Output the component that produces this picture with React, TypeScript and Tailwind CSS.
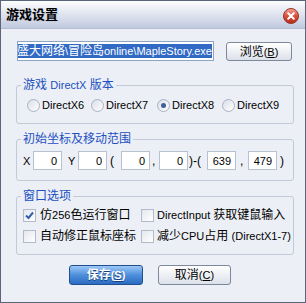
import type { ReactNode } from 'react';

// latin runs are a touch smaller than the cjk glyphs, like tahoma next to simsun
const L = ({ children }: { children: ReactNode }) => <span className="text-[11px]">{children}</span>;

const Radio = ({ checked }: { checked?: boolean }) => (
  <span className="w-[13px] h-[13px] shrink-0 rounded-full border border-[#a9b2c3] bg-linear-to-br from-[#d9dee8] to-white flex items-center justify-center">
    {checked && <span className="w-[5px] h-[5px] rounded-full bg-[#3f5f98]" />}
  </span>
);

const Check = ({ checked }: { checked?: boolean }) => (
  <span className="w-[13px] h-[13px] shrink-0 border border-[#b3bbcb] bg-linear-to-br from-[#e3e7ee] to-white flex items-center justify-center">
    {checked && (
      <svg width="9" height="9" viewBox="0 0 9 9">
        <path d="M1 4.5 L3.5 7 L8 1.5" stroke="#3560a8" strokeWidth="2" fill="none" />
      </svg>
    )}
  </span>
);

const Num = ({ value }: { value: string }) => (
  <span className="w-[29px] h-[19px] shrink-0 bg-white border border-[#b7c1d2] flex items-center justify-end pr-[4px]">
    <L>{value}</L>
  </span>
);

const Group = ({ title, className, children }: { title: ReactNode; className: string; children: ReactNode }) => (
  <fieldset className={`w-[278px] border border-[#c2c9d7] rounded-[3px] ${className}`}>
    <legend className="ml-[4px] px-[2px] h-[14px] leading-[14px] text-[#2150c2]">{title}</legend>
    {children}
  </fieldset>
);

export default function App() {
  return (
    <div className="w-[306px] h-[303px] flex flex-col border border-[#5b6478] bg-[#eceff5] overflow-hidden text-black text-[12px] leading-[14px] font-[family-name:Liberation_Sans,Noto_Sans_CJK_SC,sans-serif]">
      {/* title bar */}
      <div className="h-[28px] shrink-0 flex items-center justify-between pl-[5px] pr-[6px] bg-linear-to-b from-[#fdfdfe] to-[#c1cadf] border-b border-[#b3bcd0]">
        <span className="font-bold text-[13px] [text-shadow:1px_1px_0_#c8cfdc]">游戏设置</span>
        <svg width="16" height="16" viewBox="0 0 16 16" className="mt-[2px]">
          <defs>
            <linearGradient id="cl" x1="0" y1="0" x2="0" y2="1">
              <stop offset="0" stopColor="#f4a698" />
              <stop offset="0.5" stopColor="#d9513d" />
              <stop offset="1" stopColor="#b52a1a" />
            </linearGradient>
          </defs>
          <circle cx="8" cy="8" r="7.5" fill="url(#cl)" stroke="#9a3426" strokeWidth="1" />
          <path d="M5.2 5.2 L10.8 10.8 M10.8 5.2 L5.2 10.8" stroke="white" strokeWidth="2" strokeLinecap="round" />
        </svg>
      </div>

      <div className="flex-1 pl-[15px] pt-[12px]">
        {/* exe path */}
        <div className="flex items-start">
          <div className="ml-[1px] w-[197px] h-[20px] border border-[#8fa6c2] bg-white flex items-center justify-end overflow-hidden pr-[1px]">
            <span className="whitespace-nowrap bg-[#316ac5] text-white h-[14px] leading-[14px]">
              盛大网络<L>\</L>冒险岛<L>online\MapleStory.exe</L>
            </span>
          </div>
          <button className="ml-[12px] mt-[1px] w-[66px] h-[19px] rounded-[3px] border border-[#7d889c] bg-linear-to-b from-white to-[#dce1e9] flex items-center justify-center">
            浏览<L>(<span className="underline">B</span>)</L>
          </button>
        </div>

        {/* directx version */}
        <Group
          className="mt-[17px] pt-[6px] pb-[11px]"
          title={<>游戏 <L>DirectX</L> 版本</>}
        >
          <div className="grid grid-cols-[64px_66px_65px_auto] pl-[10px] h-[14px]">
            {['DirectX6', 'DirectX7', 'DirectX8', 'DirectX9'].map((v) => (
              <label key={v} className="flex items-center gap-[2px]">
                <Radio checked={v === 'DirectX8'} />
                <L>{v}</L>
              </label>
            ))}
          </div>
        </Group>

        {/* start position and range */}
        <Group className="mt-[8px] pt-[5px] pb-[10px]" title="初始坐标及移动范围">
          <div className="flex items-center h-[19px]">
            <span className="w-[16px] pl-[6px]"><L>X</L></span>
            <Num value="0" />
            <span className="w-[16px] pl-[6px]"><L>Y</L></span>
            <Num value="0" />
            <span className="w-[14px] pl-[3px]">(</span>
            <Num value="0" />
            <span className="w-[9px] pl-[2px]">,</span>
            <Num value="0" />
            <span className="w-[19px] pl-[1px]">)-(</span>
            <Num value="639" />
            <span className="w-[12px] pl-[4px]">,</span>
            <Num value="479" />
            <span className="pl-[3px]">)</span>
          </div>
        </Group>

        {/* window options */}
        <Group className="mt-[8px] pt-[5px] pb-[11px]" title="窗口选项">
          <div className="grid grid-cols-[118px_1fr] gap-y-[7px] pl-[6px]">
            <label className="flex items-center gap-[4px] h-[14px]">
              <Check checked />
              <span>仿<L>256</L>色运行窗口</span>
            </label>
            <label className="flex items-center gap-[3px] h-[14px]">
              <Check />
              <span><L>DirectInput </L>获取键鼠输入</span>
            </label>
            <label className="flex items-center gap-[4px] h-[14px]">
              <Check />
              <span>自动修正鼠标座标</span>
            </label>
            <label className="flex items-center gap-[3px] h-[14px]">
              <Check />
              <span>减少<L>CPU</L>占用 <L>(DirectX1-7)</L></span>
            </label>
          </div>
        </Group>

        {/* actions */}
        <div className="mt-[10px] ml-[53px] flex gap-[15px]">
          <button className="w-[74px] h-[20px] rounded-[3px] border border-[#1f4f8f] bg-linear-to-b from-[#9cc8f6] via-[#4d8fdc] to-[#2c6bc2] text-white font-bold [text-shadow:0_1px_0_#163f7c] flex items-center justify-center">
            保存<L>(<span className="underline">S</span>)</L>
          </button>
          <button className="w-[73px] h-[20px] rounded-[3px] border border-[#7d889c] bg-linear-to-b from-white to-[#dce1e9] flex items-center justify-center">
            取消<L>(<span className="underline">C</span>)</L>
          </button>
        </div>
      </div>
    </div>
  );
}
